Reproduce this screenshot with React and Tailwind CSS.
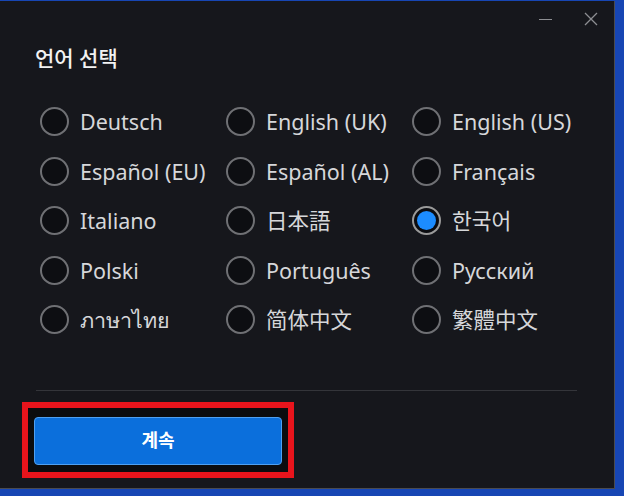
import React, { useState } from "react";

const languages = [
  "Deutsch", "English (UK)", "English (US)",
  "Español (EU)", "Español (AL)", "Français",
  "Italiano", "日本語", "한국어",
  "Polski", "Português", "Русский",
  "ภาษาไทย", "简体中文", "繁體中文",
];

const fontFor = (lang) => {
  if (lang === "日本語") return "font-['Noto_Sans','Noto_Sans_CJK_JP',sans-serif]";
  if (lang === "简体中文") return "font-['Noto_Sans','Noto_Sans_CJK_SC',sans-serif]";
  if (lang === "繁體中文") return "font-['Noto_Sans','Noto_Sans_CJK_TC',sans-serif]";
  return "font-['Noto_Sans','Noto_Sans_CJK_KR',sans-serif]";
};

const Radio = ({ label, checked, onSelect }) => (
  <button onClick={onSelect} className="flex items-center h-[49.5px] gap-[11px] text-left">
    <span
      className={
        "w-[29px] h-[29px] rounded-full border-2 flex items-center justify-center shrink-0 " +
        (checked ? "border-[#9a9a9a] bg-[#0b0c10]" : "border-[#6f7074] bg-[#0d0e12]")
      }
    >
      {checked && <span className="w-[19px] h-[19px] rounded-full bg-[#1c8cff]" />}
    </span>
    <span className={"text-[21.5px] leading-none text-[#d6d7da] whitespace-nowrap " + fontFor(label)}>{label}</span>
  </button>
);

const App = () => {
  const [selected, setSelected] = useState("한국어");

  return (
    <div className="w-[624px] h-[496px] bg-[#1746b4] overflow-hidden">
      <div className="w-[615px] h-[488px] mt-px bg-[#16171c] border-r border-b border-[#4a4b50] flex flex-col font-['Noto_Sans','Noto_Sans_CJK_KR',sans-serif]">
        {/* barre de titre */}
        <div className="h-[35px] flex items-center justify-end pr-[16px] gap-[32px]">
          <span className="w-[13px] h-px bg-[#8d8e92] mt-px" />
          <svg width="14" height="14" viewBox="0 0 14 14" className="stroke-[#8d8e92]">
            <path d="M1 1 L13 13 M13 1 L1 13" strokeWidth="1.3" />
          </svg>
        </div>

        <h1 className="ml-[35px] mt-[8px] h-[28px] leading-[28px] text-[21px] font-medium text-[#f2f2f2]">언어 선택</h1>

        <div className="ml-[40px] mt-[25px] grid grid-cols-[186px_186px_186px]">
          {languages.map((lang) => (
            <Radio key={lang} label={lang} checked={selected === lang} onSelect={() => setSelected(lang)} />
          ))}
        </div>

        <div className="ml-[36px] mr-[37px] mt-[45px] h-px bg-[#34353a]" />

        <div className="ml-[22px] mt-[11px] w-[272px] h-[76px] border-[6px] border-[#e8141c] bg-[#0b0c0f] pl-[6px] pt-[9px]">
          <button className="w-[248px] h-[48px] rounded-[4px] bg-[#0b6fdc] border border-[#4fa0f2] text-white text-[18px] font-bold">
            계속
          </button>
        </div>
      </div>
    </div>
  );
};

export default App;
